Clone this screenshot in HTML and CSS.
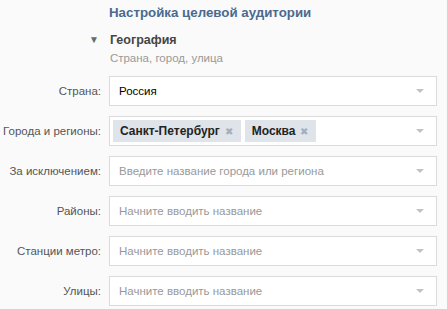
FILE: index.html
```html
<!DOCTYPE html>
<html lang="ru">
    <head>
        <meta charset="UTF-8">
        <meta name="viewport" content="width=device-width, initial-scale=1.0">
        <title>Настройка целевой аудитории</title>
        <link rel="stylesheet" href="styles.css">
    </head>
    <body>
        <div class="settings">
            <div class="title">Настройка целевой аудитории</div>
            <div class="section">
                <span class="toggle">▼</span>
                <div>
                    <div class="sectionName">География</div>
                    <div class="sectionHint">Страна, город, улица</div>
                </div>
            </div>
            <div class="row">
                <label>Страна:</label>
                <div class="select">
                    <span class="value">Россия</span>
                    <span class="arrow"></span>
                </div>
            </div>
            <div class="row">
                <label>Города и регионы:</label>
                <div class="select tokens">
                    <span class="token">Санкт-Петербург <span class="remove">✖</span></span>
                    <span class="token">Москва <span class="remove">✖</span></span>
                    <span class="arrow"></span>
                </div>
            </div>
            <div class="row">
                <label>За исключением:</label>
                <div class="select">
                    <span class="placeholder">Введите название города или региона</span>
                    <span class="arrow"></span>
                </div>
            </div>
            <div class="row">
                <label>Районы:</label>
                <div class="select">
                    <span class="placeholder">Начните вводить название</span>
                    <span class="arrow"></span>
                </div>
            </div>
            <div class="row">
                <label>Станции метро:</label>
                <div class="select">
                    <span class="placeholder">Начните вводить название</span>
                    <span class="arrow"></span>
                </div>
            </div>
            <div class="row">
                <label>Улицы:</label>
                <div class="select">
                    <span class="placeholder">Начните вводить название</span>
                    <span class="arrow"></span>
                </div>
            </div>
        </div>
    </body>
</html>
```

FILE: styles.css
```css
body {
    margin: 0;
    background: #fafafa;
    font-family: "Liberation Sans", Arial, sans-serif;
    font-size: 11.5px;
    color: #000;
}
.settings {
    padding-top: 5px;
}
.title {
    margin-left: 109px;
    font-size: 13.3px;
    font-weight: bold;
    color: #4a6a8f;
    line-height: 16px;
}
.section {
    display: flex;
    margin-top: 11px;
    margin-left: 89px;
    gap: 11px;
}
.toggle {
    color: #6a6a6a;
    font-size: 10px;
    line-height: 16px;
}
.sectionName {
    font-size: 12.5px;
    font-weight: bold;
    color: #454545;
    line-height: 16px;
}
.sectionHint {
    margin-top: 3px;
    color: #999;
    line-height: 14px;
}
.row {
    display: grid;
    grid-template-columns: 101px 328px;
    column-gap: 8px;
    align-items: center;
    margin-top: 10px;
}
.section + .row {
    margin-top: 11px;
}
.row label {
    text-align: right;
    color: #555;
    white-space: nowrap;
}
.select {
    position: relative;
    display: flex;
    align-items: center;
    height: 30px;
    box-sizing: border-box;
    border: 1px solid #dbdbdb;
    background: #fff;
    padding-left: 9px;
}
.tokens {
    padding-left: 3px;
    gap: 4px;
}
.placeholder {
    color: #999;
}
.token {
    display: flex;
    align-items: center;
    height: 22px;
    padding: 0 8px 0 7px;
    background: #dfe4ea;
    font-size: 12px;
    font-weight: bold;
    color: #222;
}
.remove {
    margin-left: 5px;
    font-size: 9.5px;
    font-weight: normal;
    color: #a5afbb;
}
.arrow {
    position: absolute;
    right: 12px;
    top: 12px;
    border-left: 4px solid transparent;
    border-right: 4px solid transparent;
    border-top: 4px solid #c2c2c2;
}
```
